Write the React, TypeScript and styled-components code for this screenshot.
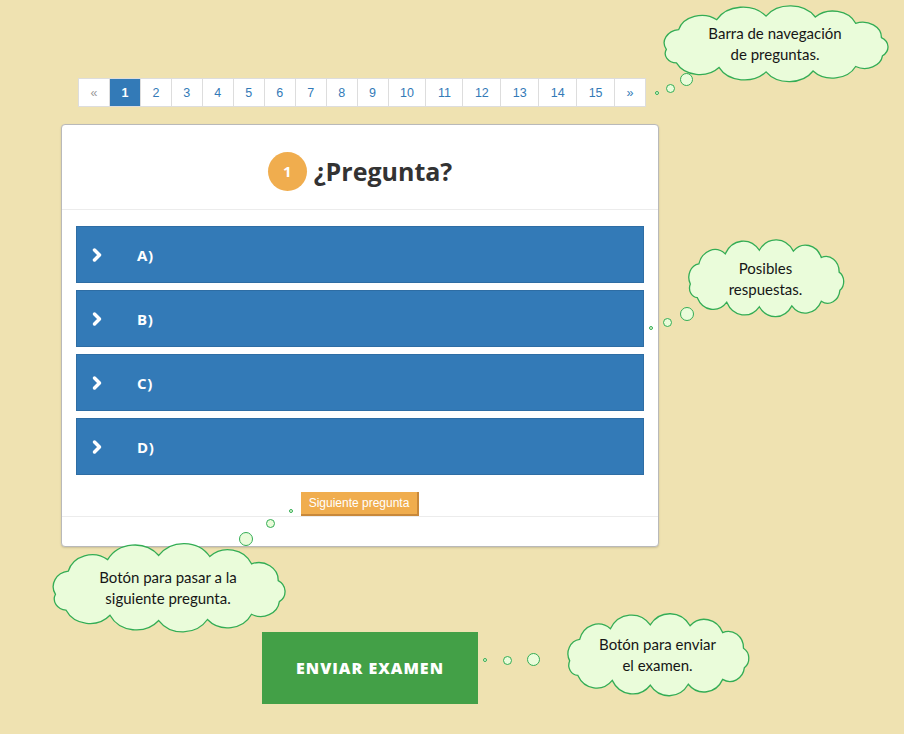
import styled, { createGlobalStyle } from 'styled-components';
import { ChevronRight } from 'lucide-react';

const GlobalStyle = createGlobalStyle`
    html,
    body {
        margin: 0;
        padding: 0;
        background: #efe2b1;
    }
`;

const pages = ['1', '2', '3', '4', '5', '6', '7', '8', '9', '10', '11', '12', '13', '14', '15'];
const answers = ['A)', 'B)', 'C)', 'D)'];

// puntos del contorno de la nube (viewBox 200x80), los arcos salen hacia fuera
const cloudPoints: [number, number][] = [
    [3, 46],
    [14, 24],
    [48, 13],
    [92, 9],
    [136, 10],
    [172, 17],
    [195, 33],
    [196, 53],
    [172, 65],
    [134, 70],
    [92, 71],
    [50, 66],
    [12, 61],
];

function cloudPath(points: [number, number][]) {
    let d = `M ${points[0][0]} ${points[0][1]}`;
    for (let i = 1; i <= points.length; i++) {
        const [px, py] = points[i - 1];
        const [x, y] = points[i % points.length];
        const r = Math.hypot(x - px, y - py) * 0.6;
        d += ` A ${r.toFixed(1)} ${r.toFixed(1)} 0 0 1 ${x} ${y}`;
    }
    return d + ' Z';
}

const CLOUD_D = cloudPath(cloudPoints);

interface CloudProps {
    left: number;
    top: number;
    width: number;
    height: number;
    lines: string[];
    bubbles: [number, number, number][];
}

function Cloud({ left, top, width, height, lines, bubbles }: CloudProps) {
    return (
        <>
            {bubbles.map(([x, y, r], i) => (
                <Bubble key={i} style={{ left: x - r, top: y - r, width: r * 2, height: r * 2 }} />
            ))}
            <CloudBox style={{ left, top, width, height }}>
                <svg width='100%' height='100%' viewBox='0 0 200 80' preserveAspectRatio='none'>
                    <path d={CLOUD_D} fill='#eafcda' stroke='#33ad55' strokeWidth={1.3} vectorEffect='non-scaling-stroke' />
                </svg>
                <CloudText>
                    {lines.map((l) => (
                        <div key={l}>{l}</div>
                    ))}
                </CloudText>
            </CloudBox>
        </>
    );
}

function App() {
    return (
        <Page>
            <GlobalStyle />
            <Main>
                <Pagination>
                    <PageItem muted>«</PageItem>
                    {pages.map((p) => (
                        <PageItem key={p} active={p === '1'}>
                            {p}
                        </PageItem>
                    ))}
                    <PageItem>»</PageItem>
                </Pagination>

                <Card>
                    <CardHeader>
                        <Number>1</Number>
                        <Title>¿Pregunta?</Title>
                    </CardHeader>
                    <CardBody>
                        <AnswerList>
                            {answers.map((a) => (
                                <Answer key={a}>
                                    <ChevronRight size={20} strokeWidth={4.2} color='#fff' />
                                    <span>{a}</span>
                                </Answer>
                            ))}
                        </AnswerList>
                        <NextButton>Siguiente pregunta</NextButton>
                    </CardBody>
                    <CardFooter />
                </Card>

                <SendButton>ENVIAR EXAMEN</SendButton>
            </Main>

            <Cloud
                left={663}
                top={8}
                width={224}
                height={72}
                lines={['Barra de navegación', 'de preguntas.']}
                bubbles={[
                    [657, 93, 2],
                    [670, 88, 4.5],
                    [686, 79, 6.5],
                ]}
            />
            <Cloud
                left={688}
                top={242}
                width={155}
                height={73}
                lines={['Posibles', 'respuestas.']}
                bubbles={[
                    [651, 328, 2],
                    [667, 322, 4.5],
                    [687, 314, 7],
                ]}
            />
            <Cloud
                left={52}
                top={546}
                width={232}
                height={84}
                lines={['Botón para pasar a la', 'siguiente pregunta.']}
                bubbles={[
                    [291, 511, 2],
                    [270, 523, 4.5],
                    [246, 539, 7],
                ]}
            />
            <Cloud
                left={567}
                top={616}
                width={181}
                height={78}
                lines={['Botón para enviar', 'el examen.']}
                bubbles={[
                    [485, 660, 2],
                    [507, 660, 4.5],
                    [533, 659, 6.5],
                ]}
            />
        </Page>
    );
}

export default App;

const Page = styled.div`
    position: relative;
    width: 904px;
    height: 734px;
    overflow: hidden;
    background: #efe2b1;
`;

const Main = styled.div`
    display: flex;
    flex-direction: column;
    align-items: flex-start;
    width: 598px;
    margin-left: 61px;
    padding-top: 78px;
`;

const Pagination = styled.div`
    display: flex;
    margin-left: 17px;
    height: 29px;
    border: 1px solid #dddddd;
    border-left: none;
    box-sizing: border-box;
    background: #fff;
`;

const PageItem = styled.div<{ active?: boolean; muted?: boolean }>`
    display: flex;
    align-items: center;
    justify-content: center;
    padding: 0 11.5px;
    border-left: 1px solid #dddddd;
    font-family: 'Liberation Sans', Arial, sans-serif;
    font-size: 12.5px;
    color: ${(props) => (props.active ? '#fff' : props.muted ? '#999' : '#337ab7')};
    background: ${(props) => (props.active ? '#337ab7' : '#fff')};
    font-weight: ${(props) => (props.active ? 700 : 400)};
`;

const Card = styled.div`
    width: 598px;
    margin-top: 17px;
    box-sizing: border-box;
    background: #fff;
    border: 1px solid #b9b9b9;
    border-radius: 4px;
    box-shadow: 0 1px 2px rgba(0, 0, 0, 0.15);
`;

const CardHeader = styled.div`
    display: flex;
    align-items: center;
    justify-content: center;
    gap: 7px;
    height: 85px;
    padding-top: 8px;
    box-sizing: border-box;
    border-bottom: 1px solid #ececec;
`;

const Number = styled.div`
    display: flex;
    align-items: center;
    justify-content: center;
    width: 39px;
    height: 39px;
    border-radius: 50%;
    background: #f0ad4e;
    color: #fff;
    font-family: 'Open Sans', sans-serif;
    font-weight: 700;
    font-size: 15px;
`;

const Title = styled.h2`
    margin: 0;
    font-family: 'Open Sans', sans-serif;
    font-weight: 700;
    font-size: 25px;
    color: #333;
`;

const CardBody = styled.div`
    display: flex;
    flex-direction: column;
    align-items: center;
    padding: 16px 14px 0;
`;

const AnswerList = styled.div`
    display: flex;
    flex-direction: column;
    gap: 7px;
    width: 100%;
`;

const Answer = styled.div`
    display: flex;
    align-items: center;
    gap: 30px;
    height: 57px;
    padding-left: 10px;
    box-sizing: border-box;
    background: #337ab7;
    border: 1px solid #2e6da4;
    color: #fff;
    font-family: 'Open Sans', sans-serif;
    font-weight: 700;
    font-size: 15px;
    letter-spacing: 0.6px;
`;

const NextButton = styled.button`
    margin-top: 17px;
    height: 24px;
    padding: 0 8px;
    background: #f0ad4e;
    border: none;
    border-right: 2px solid #c8883a;
    border-bottom: 2px solid #c8883a;
    color: #fff;
    font-family: 'Liberation Sans', Arial, sans-serif;
    font-size: 12px;
    cursor: pointer;
`;

const CardFooter = styled.div`
    height: 29px;
    border-top: 1px solid #ececec;
`;

const SendButton = styled.button`
    margin-top: 85px;
    margin-left: 201px;
    width: 216px;
    height: 72px;
    border: none;
    background: #43a047;
    color: #fff;
    font-family: 'Open Sans', sans-serif;
    font-weight: 800;
    font-size: 16px;
    letter-spacing: 1px;
    cursor: pointer;
`;

const CloudBox = styled.div`
    position: absolute;

    svg {
        position: absolute;
        inset: 0;
        overflow: visible;
    }
`;

const CloudText = styled.div`
    position: relative;
    display: flex;
    flex-direction: column;
    align-items: center;
    justify-content: center;
    height: 100%;
    font-family: Lato, 'Open Sans', sans-serif;
    font-size: 15px;
    line-height: 21px;
    color: #161616;
`;

const Bubble = styled.div`
    position: absolute;
    box-sizing: border-box;
    border: 1.3px solid #33ad55;
    border-radius: 50%;
    background: #eafcda;
`;
